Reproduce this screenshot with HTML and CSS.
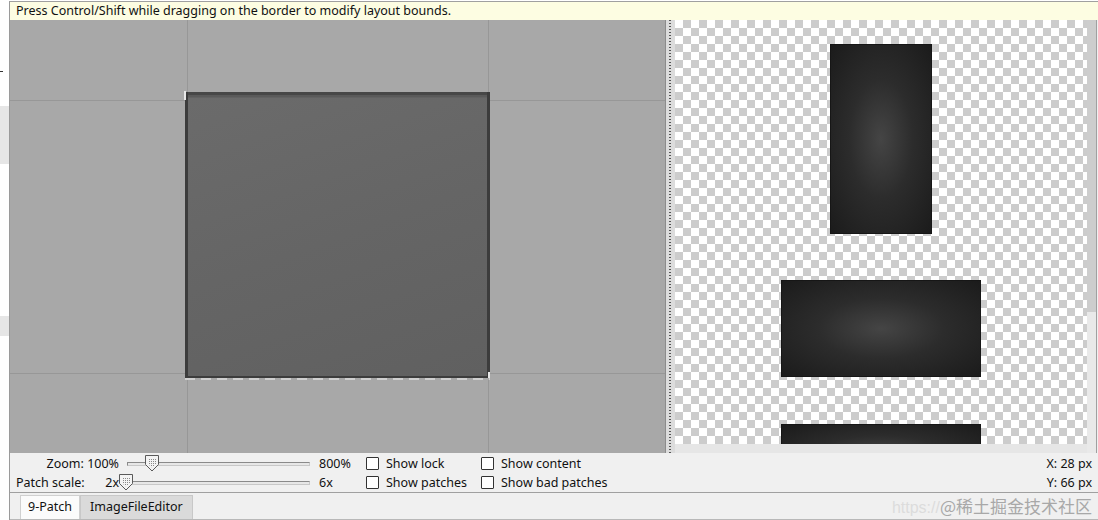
FILE: index.html
```html
<!DOCTYPE html>
<html>
<head>
<meta charset="utf-8">
<link rel="stylesheet" href="styles.css">
</head>
<body>
<div class="outside">
  <div class="dash"></div>
  <div class="blk blk1"></div>
  <div class="blk blk2"></div>
</div>
<div class="app">
  <div class="hint">Press Control/Shift while dragging on the border to modify layout bounds.</div>
  <div class="main">
    <div class="canvas">
      <div class="guide gv gv1"></div>
      <div class="guide gv gv2"></div>
      <div class="guide gh gh1"></div>
      <div class="guide gh gh2"></div>
      <div class="patch">
        <div class="patch-top"></div>
        <div class="patch-fill"></div>
      </div>
      <div class="mark mark-tl"></div>
      <div class="mark mark-br"></div>
      <div class="dashes"></div>
    </div>
    <div class="splitter"><div class="dots"></div></div>
    <div class="preview">
      <div class="checker">
        <div class="shot shot1"></div>
        <div class="shot shot2"></div>
        <div class="shot shot3"></div>
      </div>
      <div class="hbar"></div>
    </div>
    <div class="vscroll"><div class="thumb"></div></div>
  </div>
  <div class="controls">
    <div class="lbl right">Zoom: 100%</div>
    <div class="slider">
      <div class="track"></div>
      <svg class="knob knob-zoom" width="14" height="17" viewBox="0 0 14 17">
        <defs>
          <pattern id="dp" width="2" height="2" patternUnits="userSpaceOnUse">
            <rect x="0" y="0" width="1" height="1" fill="#8a8a8a"/>
          </pattern>
        </defs>
        <path d="M0.5 0.5 H13.5 V9.5 L7 16 L0.5 9.5 Z" fill="#f4f4f4" stroke="#5a5a5a"/>
        <path d="M3 3 H11 V9 L7 12.5 L3 9 Z" fill="url(#dp)"/>
      </svg>
    </div>
    <div class="val">800%</div>
    <label class="cb"><span class="box"></span>Show lock</label>
    <label class="cb"><span class="box"></span>Show content</label>
    <div class="coord">X: 28 px</div>

    <div class="lbl split"><span>Patch scale:</span><span>2x</span></div>
    <div class="slider">
      <div class="track"></div>
      <svg class="knob knob-scale" width="14" height="17" viewBox="0 0 14 17">
        <path d="M0.5 0.5 H13.5 V9.5 L7 16 L0.5 9.5 Z" fill="#f4f4f4" stroke="#5a5a5a"/>
        <path d="M3 3 H11 V9 L7 12.5 L3 9 Z" fill="url(#dp)"/>
      </svg>
    </div>
    <div class="val">6x</div>
    <label class="cb"><span class="box"></span>Show patches</label>
    <label class="cb"><span class="box"></span>Show bad patches</label>
    <div class="coord">Y: 66 px</div>
  </div>
  <div class="tabs">
    <div class="tab active">9-Patch</div>
    <div class="tab">ImageFileEditor</div>
    <div class="watermark"><span class="wm-url">https://</span>@稀土掘金技术社区</div>
  </div>
</div>
</body>
</html>
```
FILE: styles.css
```css
* { box-sizing: border-box; }
html, body { margin: 0; padding: 0; }
body {
  width: 1098px;
  height: 520px;
  overflow: hidden;
  background: #ffffff;
  display: flex;
  font-family: "Noto Sans", "Liberation Sans", sans-serif;
  font-size: 12.5px;
  color: #111;
  padding-top: 1px;
}
.outside {
  width: 9px;
  position: relative;
  background: #fff;
}
.dash { position: absolute; left: 0; top: 70px; width: 3px; height: 1px; background: #333; }
.blk { position: absolute; left: 0; width: 9px; background: #e6e6e6; }
.blk1 { top: 105px; height: 58px; }
.blk2 { top: 315px; height: 20px; }

.app {
  flex: 1;
  display: flex;
  flex-direction: column;
  border-top: 1px solid #a0a0a0;
  border-left: 1px solid #9a9a9a;
  background: #f0f0f0;
}
.hint {
  height: 18px;
  background: #fdfde2;
  padding-left: 6px;
  line-height: 18px;
  color: #111;
  white-space: nowrap;
}
.main {
  height: 433px;
  display: flex;
}
.canvas {
  width: 655px;
  background: #a8a8a8;
  position: relative;
  overflow: hidden;
}
.guide { position: absolute; background: #979797; }
.gv { top: 0; bottom: 0; width: 1px; }
.gh { left: 0; right: 0; height: 1px; }
.gv1 { left: 177px; }
.gv2 { left: 478px; }
.gh1 { top: 80px; }
.gh2 { top: 353px; }
.patch {
  position: absolute;
  left: 175px;
  top: 72px;
  width: 305px;
  height: 287px;
  background: #3c3c3c;
  padding: 0 3px 3px 3px;
  display: flex;
  flex-direction: column;
}
.patch-top {
  height: 6px;
  background: linear-gradient(#474747 0 3px, #5a5a5a 3px 5px, #626262 5px);
}
.patch-fill {
  flex: 1;
  background: linear-gradient(160deg, #6b6b6b 0%, #656565 50%, #606060 100%);
}
.mark { position: absolute; background: #e8e8e8; }
.mark-tl { left: 174px; top: 71px; width: 2px; height: 9px; }
.mark-br { left: 478px; top: 352px; width: 2px; height: 8px; }
.dashes {
  position: absolute;
  left: 175px;
  top: 358px;
  width: 305px;
  height: 2px;
  background: repeating-linear-gradient(90deg, #d0d0d0 0 10px, #a8a8a8 10px 16px);
}
.splitter {
  width: 10px;
  background: #dcdcdc;
  border-left: 1px solid #8c8c8c;
  display: flex;
  justify-content: center;
}
.dots {
  width: 2px;
  margin-left: -1px;
  background: repeating-linear-gradient(#555 0 1px, transparent 1px 3px);
}
.preview {
  width: 412px;
  display: flex;
  flex-direction: column;
}
.checker {
  height: 424px;
  overflow: hidden;
  background: repeating-conic-gradient(#cccccc 0 25%, #ffffff 0 50%) 0 0 / 16px 16px;
  display: flex;
  flex-direction: column;
  align-items: center;
  padding-top: 24px;
  gap: 46px;
}
.hbar { flex: 1; background: #e6e6e6; }
.shot {
  flex: none;
  background: radial-gradient(ellipse at center, #454545 0%, #2c2c2c 45%, #1b1b1b 100%);
  border: 1px solid #161616;
}
.shot1 { width: 102px; height: 190px; }
.shot2 { width: 200px; height: 97px; }
.shot3 { width: 200px; height: 60px; margin-top: 1px; }
.vscroll {
  width: 10px;
  background: #e9e9e9;
  border-right: 1px solid #a0a0a0;
}
.thumb { height: 292px; background: #cdcdcd; }

.controls {
  height: 40px;
  padding: 1px 0 0 6px;
  border-bottom: 1px solid #a0a0a0;
  display: grid;
  grid-template-columns: 111px 192px 47px 115px 150px 1fr;
  grid-template-rows: 19px 19px;
  align-items: center;
}
.lbl { padding-right: 8px; white-space: nowrap; }
.right { text-align: right; }
.split { display: flex; justify-content: space-between; }
.slider {
  position: relative;
  height: 19px;
  margin-right: 9px;
  display: flex;
  align-items: center;
}
.track {
  flex: 1;
  height: 4px;
  border: 1px solid #8a8a8a;
  border-bottom-color: #c8c8c8;
  border-right-color: #c8c8c8;
  background: #e7e7e7;
}
.knob { position: absolute; top: 1px; }
.knob-zoom { left: 18px; }
.knob-scale { left: -8px; }
.val { white-space: nowrap; }
.cb {
  display: flex;
  align-items: center;
  gap: 7px;
  white-space: nowrap;
}
.box {
  width: 13px;
  height: 13px;
  border: 1px solid #333;
  background: #fff;
  border-radius: 1px;
}
.coord { text-align: right; padding-right: 6px; white-space: nowrap; }

.tabs {
  flex: 1;
  display: flex;
  align-items: flex-end;
  padding: 1px 0 0 10px;
  border-bottom: 1px solid #b8b8b8;
  position: relative;
}
.tab {
  height: 24px;
  line-height: 22px;
  padding: 0 9px;
  border: 1px solid #c8c8c8;
  border-bottom: none;
  background: #dadada;
  white-space: nowrap;
}
.tab.active { background: #fbfbfb; padding: 0 7px; border-color: #d0d0d0; }
.watermark {
  position: absolute;
  right: 6px;
  top: 2px;
  font-family: "Noto Sans CJK SC", sans-serif;
  font-size: 17px;
  color: #a8a8a8;
  white-space: nowrap;
  line-height: 22px;
}
.wm-url { color: #dcdcdc; font-family: "Liberation Sans", sans-serif; font-size: 16px; }
```
